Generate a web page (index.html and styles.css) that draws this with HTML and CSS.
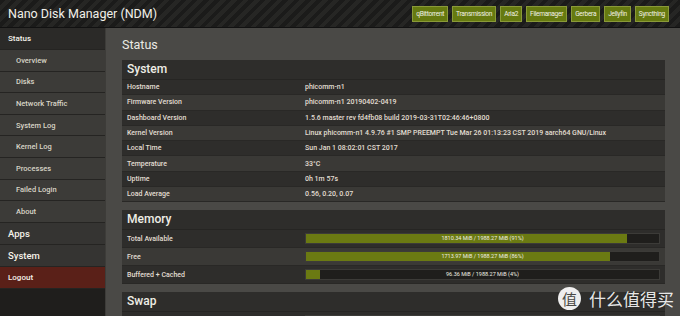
FILE: index.html
```html
<!DOCTYPE html>
<html>
<head>
  <title>Nano Disk Manager (NDM)</title>
  <link rel="stylesheet" href="styles.css">
</head>
<body>
  <header class="topbar">
    <span class="brand">Nano Disk Manager (NDM)</span>
    <nav class="apps">
      <a href="#">qBittorrent</a>
      <a href="#">Transmission</a>
      <a href="#">Aria2</a>
      <a href="#">Filemanager</a>
      <a href="#">Gerbera</a>
      <a href="#">Jellyfin</a>
      <a href="#">Syncthing</a>
    </nav>
  </header>
  <div class="layout">
    <aside class="sidebar">
      <div class="menu-top active">Status</div>
      <a class="menu-sub" href="#">Overview</a>
      <a class="menu-sub" href="#">Disks</a>
      <a class="menu-sub" href="#">Network Traffic</a>
      <a class="menu-sub" href="#">System Log</a>
      <a class="menu-sub" href="#">Kernel Log</a>
      <a class="menu-sub" href="#">Processes</a>
      <a class="menu-sub" href="#">Failed Login</a>
      <a class="menu-sub" href="#">About</a>
      <div class="menu-top">Apps</div>
      <div class="menu-top">System</div>
      <div class="menu-top logout">Logout</div>
    </aside>
    <main class="content">
      <h2>Status</h2>

      <section class="panel">
        <h3>System</h3>
        <div class="row"><span>Hostname</span><span>phicomm-n1</span></div>
        <div class="row"><span>Firmware Version</span><span>phicomm-n1 20190402-0419</span></div>
        <div class="row"><span>Dashboard Version</span><span>1.5.6 master rev fd4fb08 build 2019-03-31T02:46:46+0800</span></div>
        <div class="row"><span>Kernel Version</span><span>Linux phicomm-n1 4.9.76 #1 SMP PREEMPT Tue Mar 26 01:13:23 CST 2019 aarch64 GNU/Linux</span></div>
        <div class="row"><span>Local Time</span><span>Sun Jan 1 08:02:01 CST 2017</span></div>
        <div class="row"><span>Temperature</span><span>33°C</span></div>
        <div class="row"><span>Uptime</span><span>0h 1m 57s</span></div>
        <div class="row"><span>Load Average</span><span>0.56, 0.20, 0.07</span></div>
      </section>

      <section class="panel">
        <h3>Memory</h3>
        <div class="row bar-row"><span>Total Available</span>
          <div class="bar"><div class="fill" style="width: 91%"></div><span class="bar-text">1810.34 MiB / 1988.27 MiB (91%)</span></div>
        </div>
        <div class="row bar-row"><span>Free</span>
          <div class="bar"><div class="fill" style="width: 86%"></div><span class="bar-text">1713.97 MiB / 1988.27 MiB (86%)</span></div>
        </div>
        <div class="row bar-row"><span>Buffered + Cached</span>
          <div class="bar"><div class="fill" style="width: 4%"></div><span class="bar-text">96.36 MiB / 1988.27 MiB (4%)</span></div>
        </div>
      </section>

      <section class="panel">
        <h3>Swap</h3>
        <div class="row bar-row"><span></span>
          <div class="bar"></div>
        </div>
      </section>
    </main>
  </div>
  <div class="watermark"><span class="wm-logo">值</span>什么值得买</div>
</body>
</html>
```
FILE: styles.css
```css
html, body {margin: 0; height: 100%;}
body {
  font: 7px Roboto, "Liberation Sans", sans-serif;
  background: #4a4946;
  color: #e2ded2;
  overflow: hidden;
  position: relative;
}
a {color: inherit; text-decoration: none;}

.topbar {
  height: 28px;
  display: flex;
  align-items: center;
  justify-content: space-between;
  padding: 0 11px 0 8px;
  box-sizing: border-box;
  background: repeating-linear-gradient(135deg, #1b1b1a 0 4px, #262624 4px 8px);
  border-bottom: 1px solid #111;
}
.brand {
  font-size: 12.5px;
  color: #f0efe8;
}
.apps {display: flex; gap: 4px; padding-top: 1px;}
.apps a {
  height: 16px;
  line-height: 14px;
  padding: 0 3px;
  box-sizing: border-box;
  font-size: 6.6px;
  color: #f2f2e6;
  background: #667a10;
  border: 1px solid #8a9a38;
  letter-spacing: -0.3px;
}

.layout {display: flex; height: calc(100% - 28px);}

.sidebar {
  width: 105px;
  flex: none;
  background: #1f1e1c;
  border-right: 1px solid #3d3c39;
}
.menu-top, .menu-sub {
  display: flex;
  align-items: center;
  box-sizing: border-box;
  height: 21.6px;
  border-bottom: 1px solid #252422;
}
.menu-top {
  height: 22px;
  padding-left: 8px;
  font-size: 9.5px;
  font-weight: 500;
  color: #f4f2ea;
  background: #353432;
}
.menu-top.active {
  background: #2b2a28;
  font-size: 8px;
}
.menu-top.logout {
  background: #5a2018;
  font-size: 8px;
}
.menu-sub {
  padding-left: 16px;
  font-size: 7.5px;
  font-weight: 500;
  color: #d8d4c6;
  background: #3c3b38;
}

.content {
  flex: 1;
  padding: 9px 15px 0 16px;
}
.content h2 {
  margin: 0 0 6px;
  height: 17px;
  font-size: 12.5px;
  font-weight: normal;
  color: #ecebe4;
}
.panel {
  background: #2e2d2b;
  margin-bottom: 8px;
}
.panel h3 {
  margin: 0;
  height: 19px;
  line-height: 19px;
  padding-left: 5px;
  font-size: 12px;
  font-weight: 500;
  color: #eeede6;
  border-bottom: 1px solid #262523;
}
.row {
  display: grid;
  grid-template-columns: 178px 1fr;
  align-items: center;
  height: 15.3px;
  padding-left: 5px;
  box-sizing: border-box;
  border-bottom: 1px solid #292826;
  white-space: nowrap;
  font-weight: 500;
}
.row:nth-of-type(even) {background: #3a3936;}

.bar-row {height: 18px; padding-right: 5px;}
.bar {
  position: relative;
  height: 11px;
  background: #1f1e1c;
  border: 1px solid #3c3b38;
  box-sizing: border-box;
}
.fill {height: 100%; background: #6b7a12;}
.bar-text {
  position: absolute;
  inset: 0;
  text-align: center;
  line-height: 9px;
  font-size: 5.5px;
  font-weight: normal;
  color: #f0f0e4;
}

.watermark {
  position: absolute;
  right: 6px;
  bottom: 5px;
  display: flex;
  align-items: center;
  gap: 8px;
  font: 17px "Noto Sans CJK SC", sans-serif;
  color: rgba(255, 255, 255, 0.9);
}
.wm-logo {
  width: 23px;
  height: 23px;
  border-radius: 50%;
  background: rgba(255, 255, 255, 0.92);
  color: #4a4946;
  font-size: 15px;
  line-height: 23px;
  text-align: center;
}
```
